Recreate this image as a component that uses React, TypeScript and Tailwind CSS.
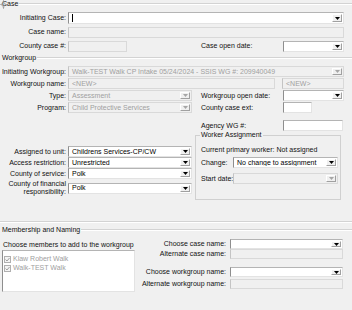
import React from 'react';

type FieldProps = {
  className?: string;
  value?: string;
  disabled?: boolean;
  arrow?: boolean;
  caret?: boolean;
};

// little dropdown button with the black triangle
const Arrow = ({ disabled }: { disabled?: boolean }) => (
  <div className="flex h-full w-[10px] shrink-0 items-center justify-center border border-t-white border-l-white border-r-[#a0a0a0] border-b-[#a0a0a0] bg-[#f0f0f0]">
    <svg width="5" height="3" viewBox="0 0 5 3">
      <path d="M0 0h5L2.5 3z" fill={disabled ? '#a6a6a6' : '#000'} />
    </svg>
  </div>
);

const Field = ({ className = '', value, disabled, arrow, caret }: FieldProps) => (
  <div
    className={`flex shrink-0 items-stretch border p-px ${
      disabled
        ? 'border-[#d9d9d9] border-l-[#c4c4c4] bg-[#f0f0f0] text-[#a0a0a0]'
        : 'border-[#e3e3e3] border-l-[#8e8e8e] border-t-[#b4b4b4] bg-white text-black'
    } ${className}`}
  >
    <span className="flex flex-1 items-center overflow-hidden whitespace-nowrap pl-[2px]">
      {caret && <span className="h-[8px] w-px bg-black" />}
      {value}
    </span>
    {arrow && <Arrow disabled={disabled} />}
  </div>
);

const Row = ({ label, children, className = '' }: { label: string; children: React.ReactNode; className?: string }) => (
  <div className={`flex items-center ${className}`}>
    <span className="w-[66px] shrink-0 text-right whitespace-nowrap">{label}</span>
    <div className="ml-[2px] flex items-center">{children}</div>
  </div>
);

const Header = ({ title, className = '' }: { title: string; className?: string }) => (
  <div className={`flex h-[7px] items-center ${className}`}>
    <span className="pl-[2px] pr-[1px] whitespace-nowrap">{title}</span>
    <div className="h-[2px] flex-1 border-t border-b border-t-[#d3d3d3] border-b-white" />
  </div>
);

const Check = () => (
  <span className="flex h-[7px] w-[7px] items-center justify-center border border-[#b0b0b0] bg-[#f4f4f4]">
    <svg width="5" height="5" viewBox="0 0 5 5">
      <path d="M0.5 2.5L2 4L4.5 1" stroke="#a0a0a0" strokeWidth="1" fill="none" />
    </svg>
  </span>
);

export default function App() {
  return (
    <div className="relative h-[310px] w-[352px] overflow-hidden bg-[#f0f0f0] font-['Liberation_Sans',Arial,sans-serif] text-[7px] leading-[8px] text-[#111]">
      {/* sparkle cursor over the Case caption */}
      <svg className="absolute left-0 top-0" width="7" height="9" viewBox="0 0 7 9">
        <path d="M3.5 0.5L4.2 3.6L6.5 4.5L4.2 5.4L3.5 8.5L2.8 5.4L0.5 4.5L2.8 3.6Z" fill="none" stroke="#8a8a8a" strokeWidth="0.7" />
      </svg>

      {/* Case */}
      <Header title="Case" />
      <div className="mt-[5px] flex flex-col gap-[2px]">
        <Row label="Initiating Case:" className="h-[12px]">
          <Field className="h-[12px] w-[276px]" arrow caret />
        </Row>
        <Row label="Case name:" className="h-[12px]">
          <Field className="h-[11px] w-[276px]" disabled />
        </Row>
        <Row label="County case #:" className="h-[12px]">
          <Field className="h-[11px] w-[59px]" disabled />
          <span className="ml-[74px] w-[82px] whitespace-nowrap">Case open date:</span>
          <Field className="h-[11px] w-[61px]" arrow />
        </Row>
      </div>

      {/* Workgroup */}
      <Header title="Workgroup" className="mt-[2px]" />
      <div className="mt-[5px] flex flex-col gap-[1px]">
        <Row label="Initiating Workgroup:" className="h-[11px]">
          <Field
            className="h-[11px] w-[276px]"
            disabled
            arrow
            value="Walk-TEST Walk CP Intake 05/24/2024 - SSIS WG #: 209940049"
          />
        </Row>
        <Row label="Workgroup name:" className="h-[11px]">
          <Field className="h-[11px] w-[207px]" disabled value="<NEW>" />
          <Field className="ml-[7px] h-[11px] w-[62px]" disabled value="<NEW>" />
        </Row>
      </div>

      <div className="mt-[1px] flex">
        <div className="flex w-[195px] shrink-0 flex-col">
          <Row label="Type:" className="h-[11px]">
            <Field className="h-[11px] w-[124px]" disabled arrow value="Assessment" />
          </Row>
          <Row label="Program:" className="mt-[1px] h-[11px]">
            <Field className="h-[11px] w-[124px]" disabled arrow value="Child Protective Services" />
          </Row>
          <Row label="Assigned to unit:" className="mt-[33px] h-[11px]">
            <Field className="h-[11px] w-[124px]" arrow value="Childrens Services-CP/CW" />
          </Row>
          <Row label="Access restriction:" className="h-[11px]">
            <Field className="h-[11px] w-[124px]" arrow value="Unrestricted" />
          </Row>
          <Row label="County of service:" className="h-[11px]">
            <Field className="h-[11px] w-[124px]" arrow value="Polk" />
          </Row>
          <div className="mt-[1px] flex items-center">
            <span className="w-[66px] shrink-0 text-right leading-[8px]">
              County of financial
              <br />
              responsibility:
            </span>
            <Field className="ml-[2px] h-[11px] w-[124px]" arrow value="Polk" />
          </div>
        </div>

        <div className="flex flex-1 flex-col">
          <div className="flex h-[11px] items-center">
            <span className="w-[88px] pl-[6px] whitespace-nowrap">Workgroup open date:</span>
            <Field className="h-[11px] w-[61px]" arrow />
          </div>
          <div className="mt-[1px] flex h-[11px] items-center">
            <span className="w-[88px] pl-[6px] whitespace-nowrap">County case ext:</span>
            <Field className="h-[11px] w-[29px]" />
          </div>
          <div className="mt-[7px] flex h-[11px] items-center">
            <span className="w-[88px] pl-[6px] whitespace-nowrap">Agency WG #:</span>
            <Field className="h-[11px] w-[60px]" />
          </div>
          <div className="relative mt-[4px] h-[65px] w-[146px] border border-[#d0d0d0] pl-[5px] pt-[10px]">
            <span className="absolute -top-[5px] left-[4px] bg-[#f0f0f0] px-px whitespace-nowrap">Worker Assignment</span>
            <div className="h-[8px] whitespace-nowrap">Current primary worker: Not assigned</div>
            <div className="mt-[3px] flex h-[11px] items-center">
              <span className="w-[32px] shrink-0">Change:</span>
              <Field className="h-[11px] w-[105px]" arrow value="No change to assignment" />
            </div>
            <div className="mt-[5px] flex h-[11px] items-center">
              <span className="w-[32px] shrink-0 whitespace-nowrap">Start date:</span>
              <Field className="h-[11px] w-[105px]" disabled arrow />
            </div>
          </div>
        </div>
      </div>

      <div className="mt-[21px] h-[2px] border-t border-b border-t-[#d3d3d3] border-b-white" />

      {/* Membership and Naming */}
      <Header title="Membership and Naming" className="mt-[3px]" />
      <div className="flex">
        <div className="flex w-[136px] shrink-0 flex-col pl-[2px]">
          <span className="mt-[8px] whitespace-nowrap pl-px">Choose members to add to the workgroup</span>
          <div className="mt-[1px] flex h-[42px] w-[133px] flex-col gap-[1px] border border-[#e3e3e3] border-l-[#8e8e8e] border-t-[#b4b4b4] bg-white pl-[1px] pt-[4px] text-[#a0a0a0]">
            <div className="flex items-center gap-[2px]">
              <Check />
              <span>Klaw Robert Walk</span>
            </div>
            <div className="flex items-center gap-[2px]">
              <Check />
              <span>Walk-TEST Walk</span>
            </div>
          </div>
        </div>

        <div className="flex flex-1 flex-col pt-[6px]">
          <div className="flex h-[10px] items-center">
            <span className="w-[90px] text-right whitespace-nowrap">Choose case name:</span>
            <Field className="ml-[4px] h-[10px] w-[113px]" arrow />
          </div>
          <div className="flex h-[10px] items-center">
            <span className="w-[90px] text-right whitespace-nowrap">Alternate case name:</span>
            <Field className="ml-[4px] h-[10px] w-[113px]" disabled />
          </div>
          <div className="mt-[8px] flex h-[10px] items-center">
            <span className="w-[90px] text-right whitespace-nowrap">Choose workgroup name:</span>
            <Field className="ml-[4px] h-[10px] w-[113px]" arrow />
          </div>
          <div className="mt-[2px] flex h-[10px] items-center">
            <span className="w-[90px] text-right whitespace-nowrap">Alternate workgroup name:</span>
            <Field className="ml-[4px] h-[10px] w-[113px]" disabled />
          </div>
        </div>
      </div>
    </div>
  );
}
